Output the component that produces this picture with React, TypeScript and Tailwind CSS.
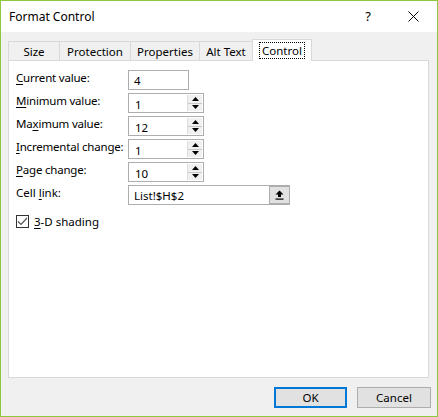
import React from 'react';

const font = { fontFamily: '"Noto Sans", "Open Sans", sans-serif' };

const Acc: React.FC<{ pre?: string; ch: string; post?: string }> = ({ pre = '', ch, post = '' }) => (
  <span className="whitespace-nowrap">
    {pre}
    <span className="underline underline-offset-2">{ch}</span>
    {post}
  </span>
);

const Spinner: React.FC = () => (
  <div className="flex flex-col w-[15px] h-full border-l border-[#dcdcdc]">
    <div className="flex-1 flex items-center justify-center bg-[#f0f0f0] border-b border-[#c8c8c8]">
      <svg width="7" height="4" viewBox="0 0 7 4"><path d="M3.5 0 L7 4 L0 4 Z" fill="#000" /></svg>
    </div>
    <div className="flex-1 flex items-center justify-center bg-[#f0f0f0]">
      <svg width="7" height="4" viewBox="0 0 7 4"><path d="M0 0 L7 0 L3.5 4 Z" fill="#000" /></svg>
    </div>
  </div>
);

const Row: React.FC<{ label: React.ReactNode; value: string; spin?: boolean }> = ({ label, value, spin = true }) => (
  <div className="flex items-center h-[20px]">
    <div className="w-[112px] -mt-[4px] whitespace-nowrap tracking-[-0.2px]">{label}</div>
    <div className={`flex h-[20px] bg-white border border-[#adadad] ${spin ? 'w-[76px] p-[1px]' : 'w-[61px]'}`}>
      <div className="flex-1 pl-[5px] leading-[18px] mt-[1px]">{value}</div>
      {spin && <Spinner />}
    </div>
  </div>
);

const tabs = [
  { name: 'Size', w: 'w-[52px]' },
  { name: 'Protection', w: 'w-[72px]' },
  { name: 'Properties', w: 'w-[70px]' },
  { name: 'Alt Text', w: 'w-[54px]' },
];

export default function App() {
  return (
    <div style={font} className="w-[438px] h-[417px] border border-[#8fc73e] bg-[#f0f0f0] flex flex-col text-[11.5px] text-black">
      {/* title bar */}
      <div className="h-[31px] bg-white flex items-center justify-between pl-[8px] pr-[18px]">
        <span className="text-[12px] mt-[1px]">Format Control</span>
        <div className="flex items-center gap-[37px]">
          <span className="text-[13px]">?</span>
          <svg width="11" height="11" viewBox="0 0 11 11">
            <path d="M0.5 0.5 L10.5 10.5 M10.5 0.5 L0.5 10.5" stroke="#000" strokeWidth="1" />
          </svg>
        </div>
      </div>

      {/* tabs */}
      <div className="flex items-end pl-[7px] pt-[6px] h-[28px]">
        {tabs.map(t => (
          <div key={t.name} className={`${t.w} h-[19px] pt-[2px] border border-b-0 border-[#d9d9d9] -ml-px first:ml-0 flex items-center justify-center bg-[#f0f0f0]`}>
            {t.name}
          </div>
        ))}
        <div className="w-[60px] h-[22px] -mb-px relative z-10 bg-white border border-b-0 border-[#d9d9d9] -ml-px flex items-center justify-center">
          <span className="px-[2px] leading-[15px] border border-dotted border-black">Control</span>
        </div>
      </div>

      {/* panel */}
      <div className="ml-[7px] w-[421px] h-[318px] bg-white border border-[#d9d9d9] pl-[7px] pt-[9px] flex flex-col gap-[3px]">
        <Row label={<Acc ch="C" post="urrent value:" />} value="4" spin={false} />
        <Row label={<Acc ch="M" post="inimum value:" />} value="1" />
        <Row label={<Acc pre="Ma" ch="x" post="imum value:" />} value="12" />
        <Row label={<Acc ch="I" post="ncremental change:" />} value="1" />
        <Row label={<Acc ch="P" post="age change:" />} value="10" />
        <div className="flex items-center h-[20px]">
          <div className="w-[112px] -mt-[4px]"><Acc pre="Cell " ch="l" post="ink:" /></div>
          <div className="flex w-[162px] h-[20px] bg-white border border-[#adadad]">
            <div className="flex-1 pl-[5px] leading-[18px] mt-[1px]">List!$H$2</div>
            <div className="w-[21px] h-[18px] bg-[#e1e1e1] border border-[#adadad] -mr-px flex items-center justify-center">
              <svg width="9" height="10" viewBox="0 0 9 10">
                <path d="M4.5 0.5 L8.5 4.5 L6 4.5 L6 7 L3 7 L3 4.5 L0.5 4.5 Z" fill="#000" />
                <rect x="0.5" y="8.5" width="8" height="1.2" fill="#000" />
              </svg>
            </div>
          </div>
        </div>
        <div className="flex items-center gap-[5px] mt-[5px]">
          <div className="w-[13px] h-[13px] border border-[#333] bg-white flex items-center justify-center">
            <svg width="11" height="9" viewBox="0 0 11 9">
              <path d="M1 4.5 L4 7.5 L10 1" stroke="#555" strokeWidth="1.2" fill="none" />
            </svg>
          </div>
          <Acc ch="3" post="-D shading" />
        </div>
      </div>

      {/* buttons */}
      <div className="flex justify-end gap-[10px] pr-[6px] pt-[9px]">
        <button className="w-[73px] h-[21px] bg-[#e1e1e1] border-2 border-[#0078d7] leading-none">OK</button>
        <button className="w-[74px] h-[21px] bg-[#e1e1e1] border border-[#adadad] leading-none">Cancel</button>
      </div>
    </div>
  );
}
